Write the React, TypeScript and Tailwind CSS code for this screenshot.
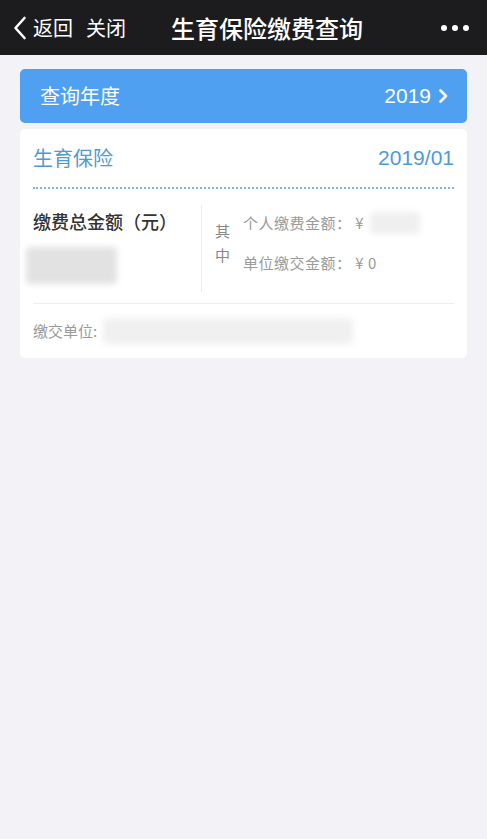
const FONT = "font-['Noto_Sans_CJK_SC','Noto_Sans',sans-serif]"

function Blur({ className }: { className: string }) {
  return <span className={`block rounded-sm blur-[3px] ${className}`} />
}

export default function App() {
  return (
    <div className={`min-h-[839px] w-full bg-[#f3f3f7] ${FONT}`}>
      {/* nav bar */}
      <div className="flex h-[55px] items-center bg-[#1c1c1e] text-white">
        <svg width="14" height="24" viewBox="0 0 14 24" className="ml-[13px]">
          <path d="M11.5 2 L2.5 12 L11.5 22" fill="none" stroke="white" strokeWidth="2.6" strokeLinecap="round" strokeLinejoin="round" />
        </svg>
        <span className="ml-[6px] text-[20px] leading-none">返回</span>
        <span className="ml-[13px] text-[20px] leading-none">关闭</span>
        <span className="ml-[45px] text-[24px] font-medium leading-none">生育保险缴费查询</span>
        <div className="ml-auto mr-[18px] flex gap-[5px]">
          <span className="h-[6px] w-[6px] rounded-full bg-white" />
          <span className="h-[6px] w-[6px] rounded-full bg-white" />
          <span className="h-[6px] w-[6px] rounded-full bg-white" />
        </div>
      </div>

      {/* year selector */}
      <div className="mx-[20px] mt-[14px] flex h-[54px] items-center justify-between rounded-[5px] bg-[#4fa0f0] pl-[20px] pr-[18px] text-white">
        <span className="text-[20px]">查询年度</span>
        <div className="flex items-center gap-[7px]">
          <span className="font-['Liberation_Sans',sans-serif] text-[21px]">2019</span>
          <svg width="11" height="16" viewBox="0 0 11 16">
            <path d="M2.5 2.5 L8 8 L2.5 13.5" fill="none" stroke="white" strokeWidth="2.6" strokeLinecap="round" strokeLinejoin="round" />
          </svg>
        </div>
      </div>

      {/* record card */}
      <div className="mx-[20px] mt-[6px] rounded-[5px] bg-white px-[13px]">
        <div className="flex h-[60px] items-center justify-between border-b-2 border-dotted border-[#7ab4ea] text-[#4d9ad9]">
          <span className="text-[20px]">生育保险</span>
          <span className="font-['Liberation_Sans',sans-serif] text-[21px]">2019/01</span>
        </div>

        <div className="flex border-b border-[#eeeeee] pb-[11px] pt-[16px]">
          <div className="w-[169px] border-r border-[#eeeeee]">
            <div className="mt-[4px] text-[18px] font-medium leading-[24px] text-[#333333]">缴费总金额（元）</div>
            <Blur className="-ml-[7px] mt-[14px] h-[37px] w-[91px] bg-[#e2e2e2]" />
            <div className="h-[8px]" />
          </div>
          <div className="flex items-center pl-[13px]">
            <div className="-mt-[12px] flex w-[28px] flex-col gap-[3px] text-[15px] leading-[21px] text-[#888888]">
              <span>其</span>
              <span>中</span>
            </div>
            <div className="-mt-[12px] flex flex-col gap-[18px] text-[15px] leading-[22px] tracking-[0.5px] text-[#9a9a9a]">
              <div className="flex items-center">
                <span>个人缴费金额： ¥</span>
                <Blur className="ml-[6px] h-[22px] w-[50px] bg-[#efefef]" />
              </div>
              <div>单位缴交金额： ¥ 0</div>
            </div>
          </div>
        </div>

        <div className="flex h-[54px] items-center text-[15px] text-[#9a9a9a]">
          <span>缴交单位:</span>
          <Blur className="ml-[6px] h-[26px] w-[250px] bg-[#f0f0f0]" />
        </div>
      </div>
    </div>
  )
}
